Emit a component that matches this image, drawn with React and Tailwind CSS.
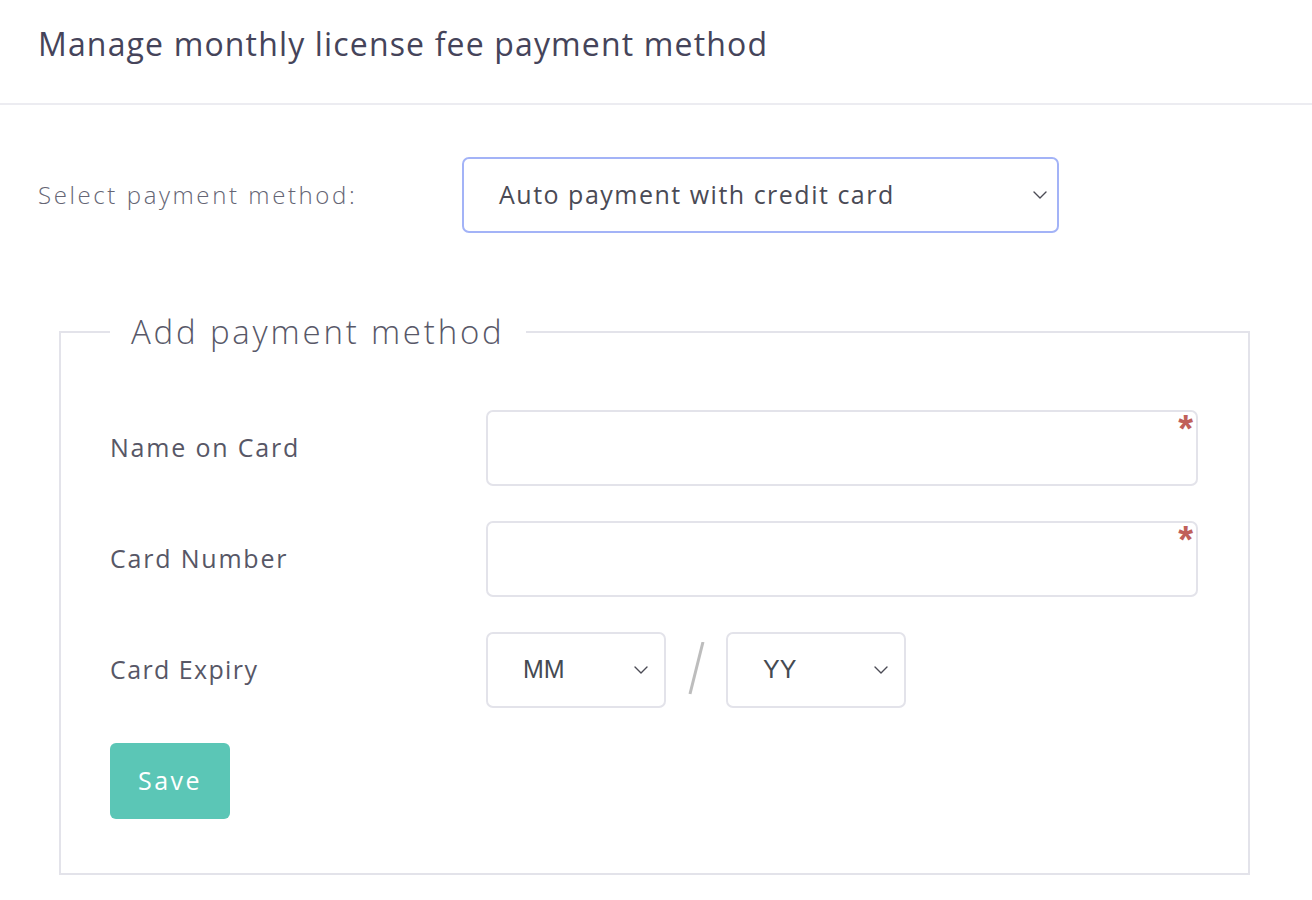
import { useState } from "react";

const Chevron = () => (
    <svg width="14" height="8" viewBox="0 0 14 8" fill="none" className="shrink-0">
        <path d="M1 1l6 6 6-6" stroke="#4b4b55" strokeWidth="1.4" strokeLinecap="round" strokeLinejoin="round" />
    </svg>
);

const Required = () => (
    <span className="absolute right-[5px] top-0 text-[38px] leading-none font-bold text-[#c0605a] font-['Liberation_Sans',sans-serif]">*</span>
);

function Field({ label, value, onChange }) {
    return (
        <div className="flex items-center">
            <label className="w-[376px] shrink-0 text-[25px] tracking-[1.8px] text-[#575766]">{label}</label>
            <div className="relative w-[712px]">
                <input
                    value={value}
                    onChange={e => onChange(e.target.value)}
                    className="w-full h-[76px] rounded-[7px] border-2 border-[#e3e3ea] bg-white px-5 text-[22px] text-[#444] outline-none"
                />
                <Required />
            </div>
        </div>
    );
}

function SmallSelect({ text }) {
    return (
        <div className="w-[180px] h-[76px] rounded-[7px] border-2 border-[#e3e3ea] bg-white flex items-center justify-between pl-[35px] pr-[16px]">
            <span className="text-[25px] text-[#454a52] font-['Liberation_Sans',sans-serif]">{text}</span>
            <Chevron />
        </div>
    );
}

export default function App() {
    const [name, setName] = useState("");
    const [number, setNumber] = useState("");

    return (
        <div className="min-h-screen bg-white font-['Open_Sans',sans-serif]">
            {/* Header */}
            <div className="h-[105px] border-b-2 border-[#ececf1] flex items-center px-[38px]">
                <h1 className="text-[32px] font-medium text-[#45445a] tracking-[1.15px] -mt-[16px]">Manage monthly license fee payment method</h1>
            </div>

            <div className="pl-[38px] pr-[62px] pt-[52px]">
                {/* Payment method select */}
                <div className="flex items-center">
                    <span className="w-[424px] shrink-0 text-[24px] font-light tracking-[2.6px] text-[#656574]">Select payment method:</span>
                    <div className="w-[597px] h-[76px] rounded-[7px] border-2 border-[#a3b3f7] bg-white flex items-center justify-between pl-[35px] pr-[10px]">
                        <span className="text-[25px] tracking-[1.5px] text-[#4a4a55]">Auto payment with credit card</span>
                        <Chevron />
                    </div>
                </div>

                {/* Add payment method */}
                <fieldset className="mt-[75px] ml-[21px] border-2 border-[#e3e3ea] pl-[49px] pr-[50px] pb-[54px]">
                    <legend className="px-[21px] text-[33px] font-light leading-[48px] tracking-[2.8px] text-[#585868]">Add payment method</legend>
                    <div className="pt-[54px] flex flex-col gap-[35px]">
                        <Field label="Name on Card" value={name} onChange={setName} />
                        <Field label="Card Number" value={number} onChange={setNumber} />
                        <div className="flex items-center">
                            <span className="w-[376px] shrink-0 text-[25px] tracking-[1.4px] text-[#575766]">Card Expiry</span>
                            <SmallSelect text="MM" />
                            <svg width="60" height="56" viewBox="0 0 60 56" className="shrink-0">
                                <line x1="37" y1="0" x2="24" y2="52" stroke="#bdbdbd" strokeWidth="3" />
                            </svg>
                            <SmallSelect text="YY" />
                        </div>
                        <div>
                            <button className="w-[120px] h-[76px] rounded-[6px] bg-[#5bc6b6] text-white text-[25px] tracking-[2.5px]">Save</button>
                        </div>
                    </div>
                </fieldset>
            </div>
        </div>
    );
}
